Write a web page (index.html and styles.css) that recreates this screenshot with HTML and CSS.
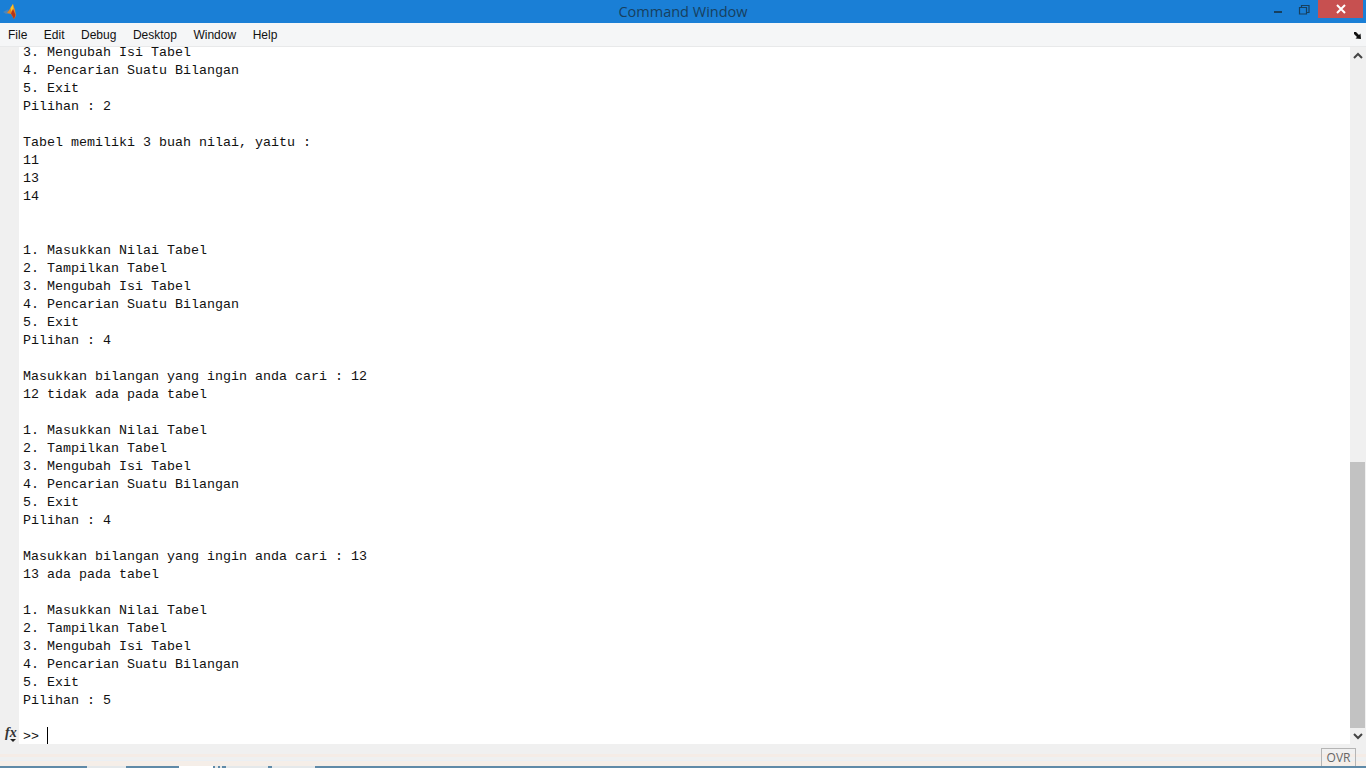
FILE: index.html
```html
<!DOCTYPE html>
<html lang="en">
<head>
<meta charset="utf-8">
<title>Command Window</title>
<link rel="stylesheet" href="styles.css">
</head>
<body>
<div class="window">
  <header class="titlebar">
    <svg class="logo" width="24" height="23" viewBox="0 0 24 23">
      <path d="M3 12 L8 9.500 L9.500 13.500 L6 14Z" fill="#4f86b8"/>
      <path d="M7 13 L10.500 8 L13 4 L15 10 L16 15.500 L14 19 L11 14Z" fill="#e8861f"/>
      <path d="M10.500 8 L13 4 L13.500 9 L11.500 11.500Z" fill="#f4c430"/>
      <path d="M11 13.500 L13 9 L15.500 15 L14 19Z" fill="#b5341a"/>
    </svg>
    <div class="title">Command Window</div>
    <div class="controls">
      <svg class="ctl" width="29" height="18" viewBox="0 0 29 18"><rect x="10" y="10" width="8" height="2" fill="#17405f"/></svg>
      <svg class="ctl" width="25" height="18" viewBox="0 0 25 18"><path d="M6.500 6.500h7v6.500h-7zM8.500 6V4.500h7.500v7H14" fill="none" stroke="#17405f" stroke-width="1.200"/></svg>
      <div class="close"><svg width="12" height="10" viewBox="0 0 12 10"><path d="M2 1L10 9M10 1L2 9" stroke="#fff" stroke-width="2"/></svg></div>
    </div>
  </header>
  <nav class="menubar">
    <span class="menu">File</span>
    <span class="menu">Edit</span>
    <span class="menu">Debug</span>
    <span class="menu">Desktop</span>
    <span class="menu">Window</span>
    <span class="menu">Help</span>
    <svg class="undock" width="10" height="9" viewBox="0 0 10 9"><path d="M1 1L3 1L6 4L7.500 2.500L8 8L2.500 7.500L4 6L1 3Z" fill="#111"/></svg>
  </nav>
  <main class="body">
    <aside class="gutter">
      <div class="fx"><i class="fx-label">fx</i><svg class="fx-caret" width="6" height="3" viewBox="0 0 6 3"><path d="M0 0H6L3 3Z" fill="#222"/></svg></div>
    </aside>
    <section class="console">
<pre class="transcript">3. Mengubah Isi Tabel
4. Pencarian Suatu Bilangan
5. Exit
Pilihan : 2

Tabel memiliki 3 buah nilai, yaitu :
11
13
14


1. Masukkan Nilai Tabel
2. Tampilkan Tabel
3. Mengubah Isi Tabel
4. Pencarian Suatu Bilangan
5. Exit
Pilihan : 4

Masukkan bilangan yang ingin anda cari : 12
12 tidak ada pada tabel

1. Masukkan Nilai Tabel
2. Tampilkan Tabel
3. Mengubah Isi Tabel
4. Pencarian Suatu Bilangan
5. Exit
Pilihan : 4

Masukkan bilangan yang ingin anda cari : 13
13 ada pada tabel

1. Masukkan Nilai Tabel
2. Tampilkan Tabel
3. Mengubah Isi Tabel
4. Pencarian Suatu Bilangan
5. Exit
Pilihan : 5

</pre>
      <div class="prompt"><span>&gt;&gt; </span><span class="caret"></span></div>
    </section>
    <aside class="scrollbar">
      <svg class="arrow" width="16" height="16" viewBox="0 0 16 16"><path d="M4 11L8 7L12 11" fill="none" stroke="#444" stroke-width="2"/></svg>
      <div class="track"><div class="thumb"></div></div>
      <svg class="arrow" width="16" height="16" viewBox="0 0 16 16"><path d="M4 6L8 10L12 6" fill="none" stroke="#444" stroke-width="2"/></svg>
    </aside>
  </main>
  <footer class="statusbar"><div class="ovr">OVR</div></footer>
  <div class="strip">
    <span class="tab tab-a"></span>
    <span class="tab tab-c"></span>
    <span class="tab tab-d"></span>
    <span class="tab tab-d2"></span>
    <span class="tab tab-e"></span>
    <span class="tab tab-f"></span>
  </div>
</div>
</body>
</html>
```

FILE: styles.css
```css
* { box-sizing: border-box; }
html, body { margin: 0; height: 100%; overflow: hidden; }
body { font-family: "Open Sans", "Liberation Sans", sans-serif; background: #fff; }
.window { width: 1366px; height: 768px; display: flex; flex-direction: column; }

.titlebar { height: 23px; flex: none; background: #1a7fd6; display: flex; align-items: center; position: relative; }
.logo { flex: none; }
.title { position: absolute; left: 0; right: 0; text-align: center; font-size: 14.5px; color: #17405f; line-height: 23px; }
.controls { margin-left: auto; display: flex; align-items: flex-start; height: 100%; padding-right: 3px; position: relative; }
.ctl { display: block; margin-top: 1px; }
.close { width: 45px; height: 18px; background: #c75050; display: flex; align-items: center; justify-content: center; }

.menubar { height: 24px; flex: none; background: #f5f6f7; border-bottom: 1px solid #e8e9ea; display: flex; align-items: center; padding: 1px 0 0 8px; gap: 16.5px; font-family: "Liberation Sans", sans-serif; font-size: 12px; color: #111; }
.undock { margin-left: auto; margin-right: 3px; }

.body { flex: 1; min-height: 0; display: flex; }
.gutter { width: 19px; flex: none; background: #f0f0f0; display: flex; flex-direction: column; justify-content: flex-end; }
.fx { position: relative; height: 24px; }
.fx-label { position: absolute; left: 5px; top: 6px; font-family: "Liberation Serif", serif; font-size: 14px; line-height: 14px; font-weight: bold; color: #333; }
.fx-caret { position: absolute; left: 10px; top: 19px; display: block; }

.console { flex: 1; min-width: 0; overflow: hidden; display: flex; flex-direction: column; justify-content: flex-end; padding-left: 4px; background: #fff; font-family: "Liberation Mono", monospace; font-size: 13.33px; line-height: 18px; color: #111; }
.transcript { margin: 0; font: inherit; flex: none; }
.prompt { flex: none; height: 18px; margin-bottom: -2px; display: flex; white-space: pre; }
.caret { width: 1px; height: 18px; margin-top: -1px; background: #000; }

.scrollbar { width: 16px; flex: none; background: #f0f0f0; display: flex; flex-direction: column; }
.arrow { flex: none; display: block; }
.track { flex: 1; display: flex; flex-direction: column; justify-content: flex-end; }
.thumb { height: 266px; margin-right: 1px; background: #c2c2c2; }

.statusbar { height: 22px; flex: none; background: linear-gradient(#f0f0f0 0 10px, #f5ece6 10px 13px, #eff0f0 13px 16px, #ebeff3 16px 17px, #f5eee8 17px 22px); display: flex; justify-content: flex-end; align-items: flex-end; padding-right: 10px; }
.ovr { width: 35px; height: 18px; border: 1px solid #b5b5b5; border-bottom: 0; font-family: "Open Sans", sans-serif; font-size: 12px; line-height: 18px; text-align: center; color: #666; }

.strip { height: 2px; flex: none; background: #5f8aa8; display: flex; }
.tab { display: block; height: 100%; background: #e4e8ea; }
.tab-a { width: 39px; margin-left: 87px; }
.tab-c { width: 34px; margin-left: 53px; background: #fff; }
.tab-d { width: 3px; margin-left: 2px; }
.tab-d2 { width: 2px; margin-left: 2px; }
.tab-e { width: 42px; margin-left: 4px; }
.tab-f { width: 43px; margin-left: 4px; }
```
